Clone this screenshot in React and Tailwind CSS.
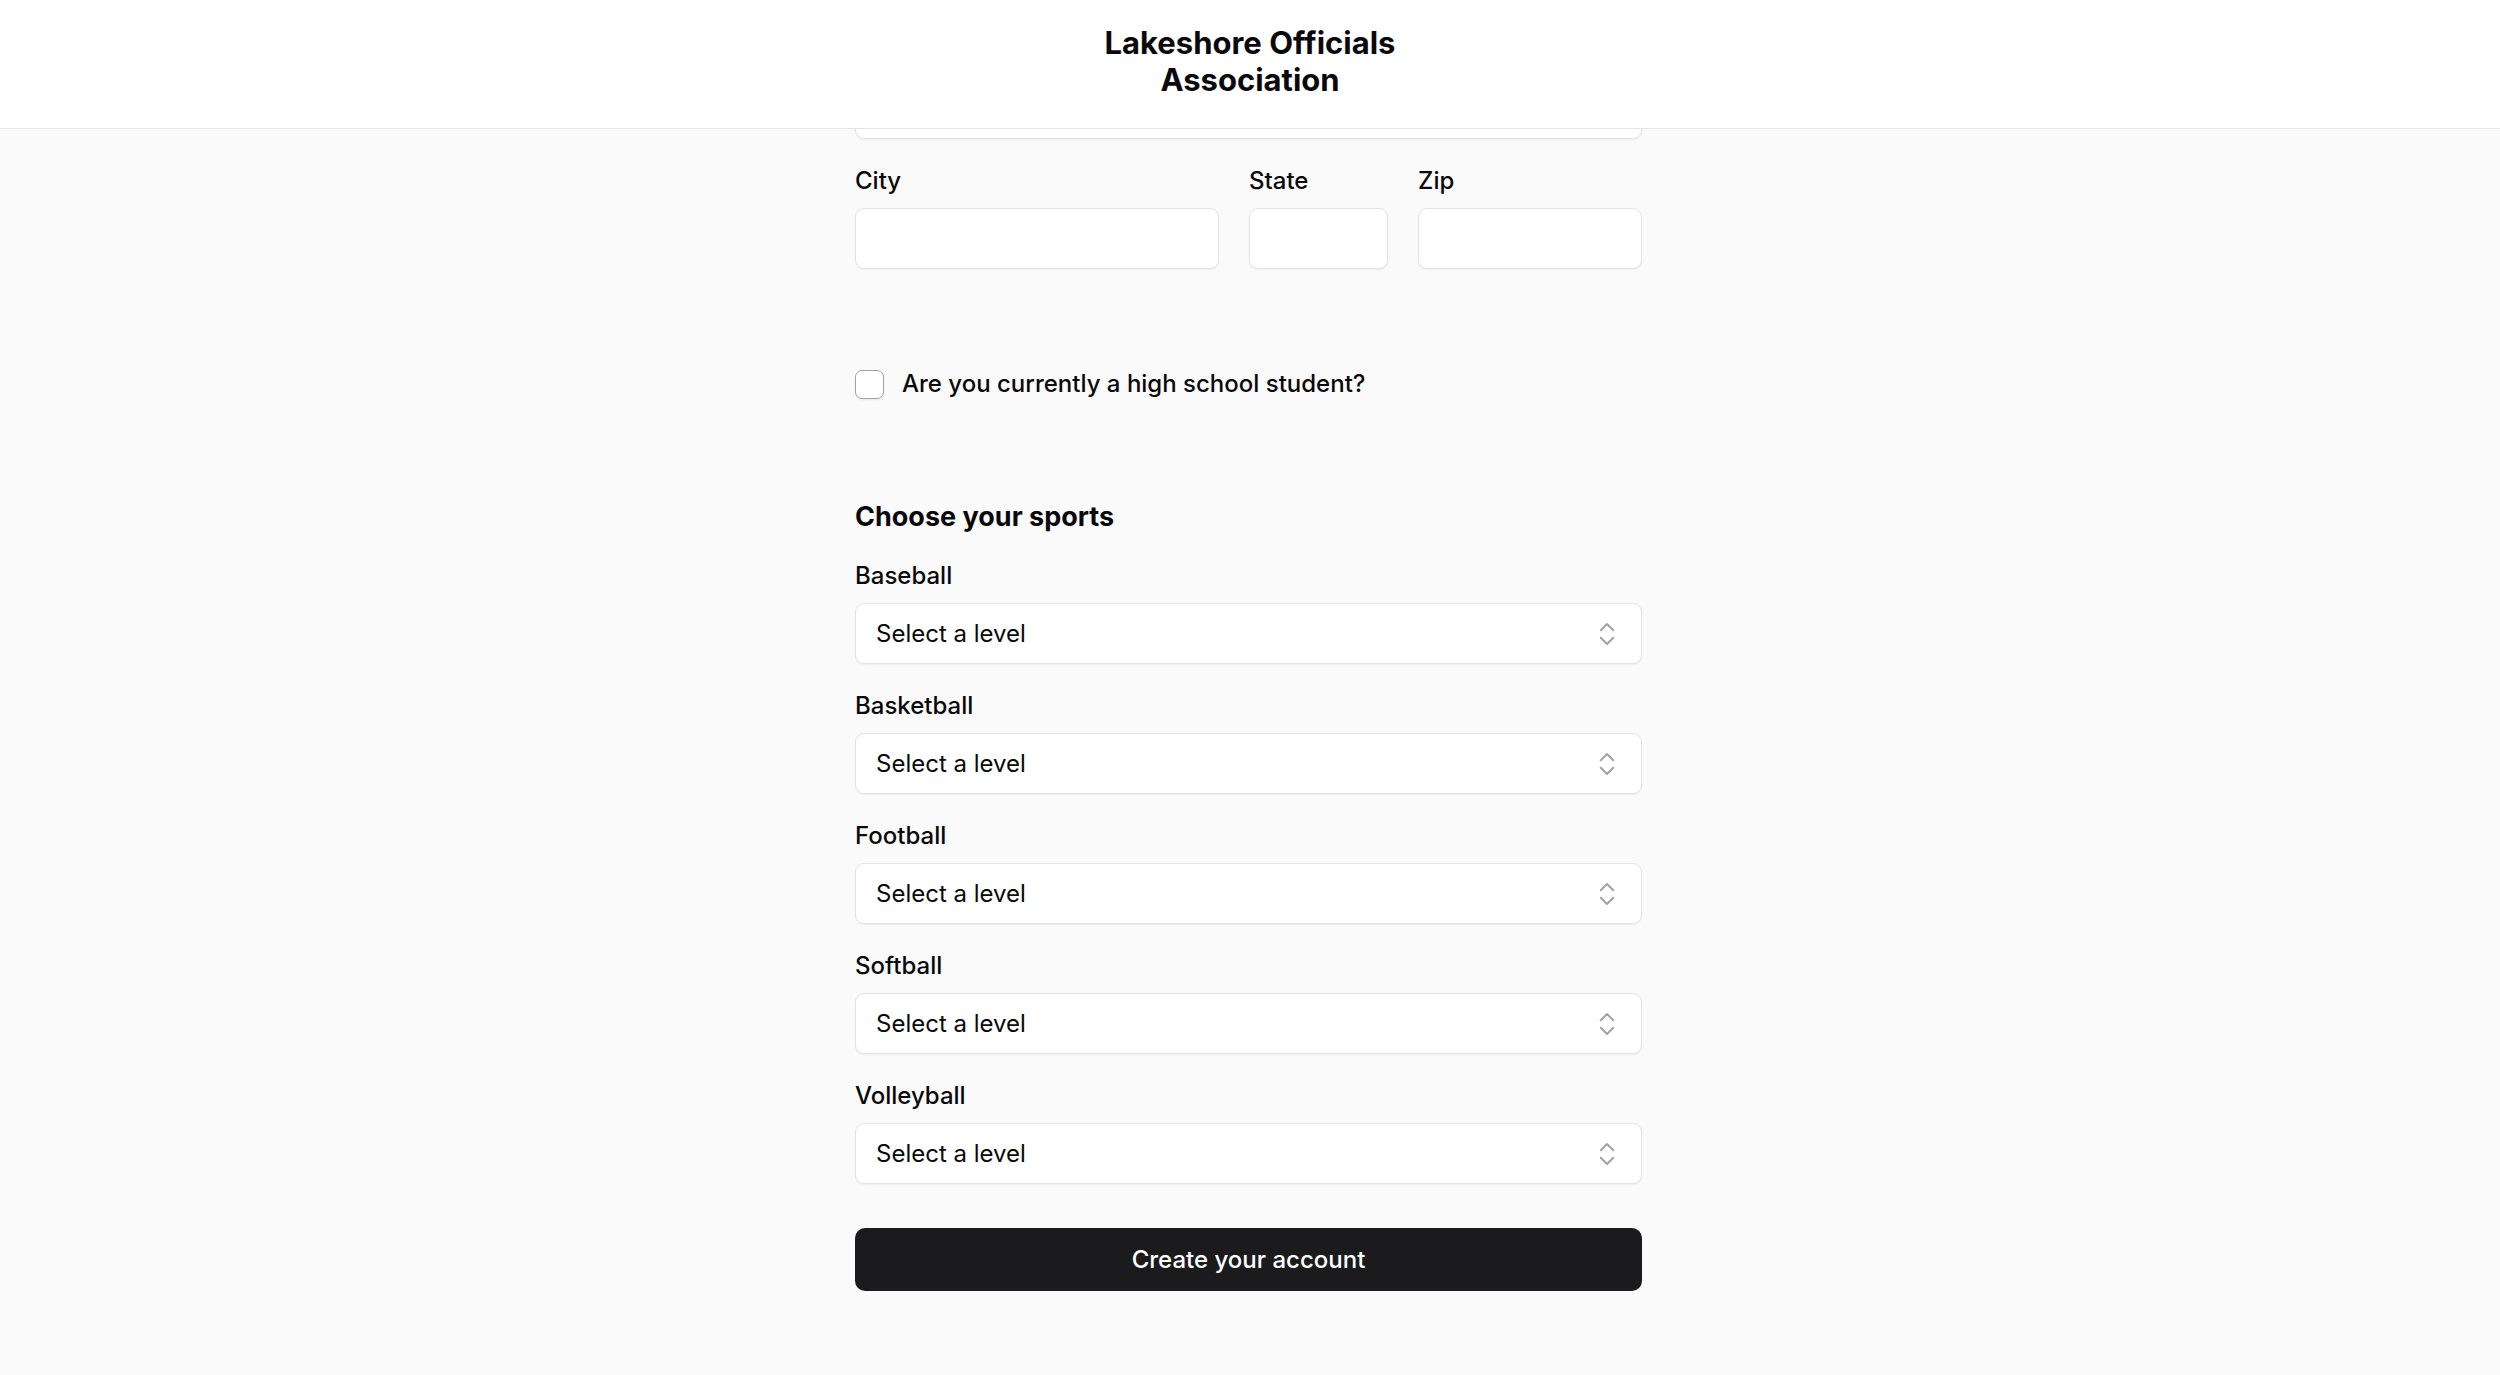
import React from 'react';

const sports = ['Baseball', 'Basketball', 'Football', 'Softball', 'Volleyball'];

// up/down chevrons used by the level pickers
const UpDown = () => (
  <svg width="30" height="30" viewBox="0 0 24 24" fill="none" stroke="#a1a1aa" strokeWidth="1.6" strokeLinecap="round" strokeLinejoin="round">
    <path d="m7 9 5-5 5 5" />
    <path d="m7 15 5 5 5-5" />
  </svg>
);

const Field = ({ label, className = '' }) => (
  <div className={className}>
    <label className="block text-[24px] leading-[36px] font-medium text-[#09090b]">{label}</label>
    <input
      type="text"
      className="mt-[9px] block h-[61px] w-full rounded-[9px] border border-[#e4e4e7] bg-white px-[20px] text-[24px] shadow-[0_1px_2px_rgba(0,0,0,0.06)] outline-none"
    />
  </div>
);

const LevelSelect = ({ sport }) => (
  <div>
    <label className="block text-[24px] leading-[36px] font-medium text-[#09090b]">{sport}</label>
    <button
      type="button"
      className="mt-[9px] flex h-[61px] w-full items-center justify-between rounded-[9px] border border-[#e4e4e7] bg-white pl-[20px] pr-[19px] text-[24px] text-[#09090b] shadow-[0_1px_2px_rgba(0,0,0,0.06)]"
    >
      <span>Select a level</span>
      <UpDown />
    </button>
  </div>
);

export default function App() {
  return (
    <div className="min-h-screen bg-[#fafafa] text-[#09090b]" style={{ fontFamily: 'Inter, "Noto Sans", sans-serif' }}>
      {/* Header sits over the scrolled form */}
      <header className="fixed inset-x-0 top-0 z-10 flex h-[129px] justify-center border-b border-[#e5e5e5] bg-white pt-[24px]">
        <h1 className="max-w-[360px] text-center text-[31px] leading-[37px] font-bold text-[#09090b]">
          Lakeshore Officials Association
        </h1>
      </header>

      <main className="ml-[calc(50%-395px)] w-[787px] pt-[33px] pb-[80px]">
        <Field label="Address" />

        <div className="mt-[24px] flex gap-[30px]">
          <Field label="City" className="w-[364px]" />
          <Field label="State" className="w-[139px]" />
          <Field label="Zip" className="w-[224px]" />
        </div>

        <div className="mt-[97px] flex h-[36px] items-center gap-[18px]">
          <input
            type="checkbox"
            className="h-[29px] w-[29px] appearance-none rounded-[7px] border border-[#a1a1aa] bg-white shadow-[0_1px_2px_rgba(0,0,0,0.08)]"
          />
          <span className="text-[24px] leading-[36px] font-medium">Are you currently a high school student?</span>
        </div>

        <h2 className="mt-[94px] text-[27px] leading-[42px] font-bold">Choose your sports</h2>

        <div className="mt-[20px] flex flex-col gap-[24px]">
          {sports.map((s) => (
            <LevelSelect key={s} sport={s} />
          ))}
        </div>

        <button
          type="button"
          className="mt-[44px] flex h-[63px] w-full items-center justify-center rounded-[10px] bg-[#1b1b1d] text-[24px] font-medium text-white"
        >
          Create your account
        </button>
      </main>
    </div>
  );
}
